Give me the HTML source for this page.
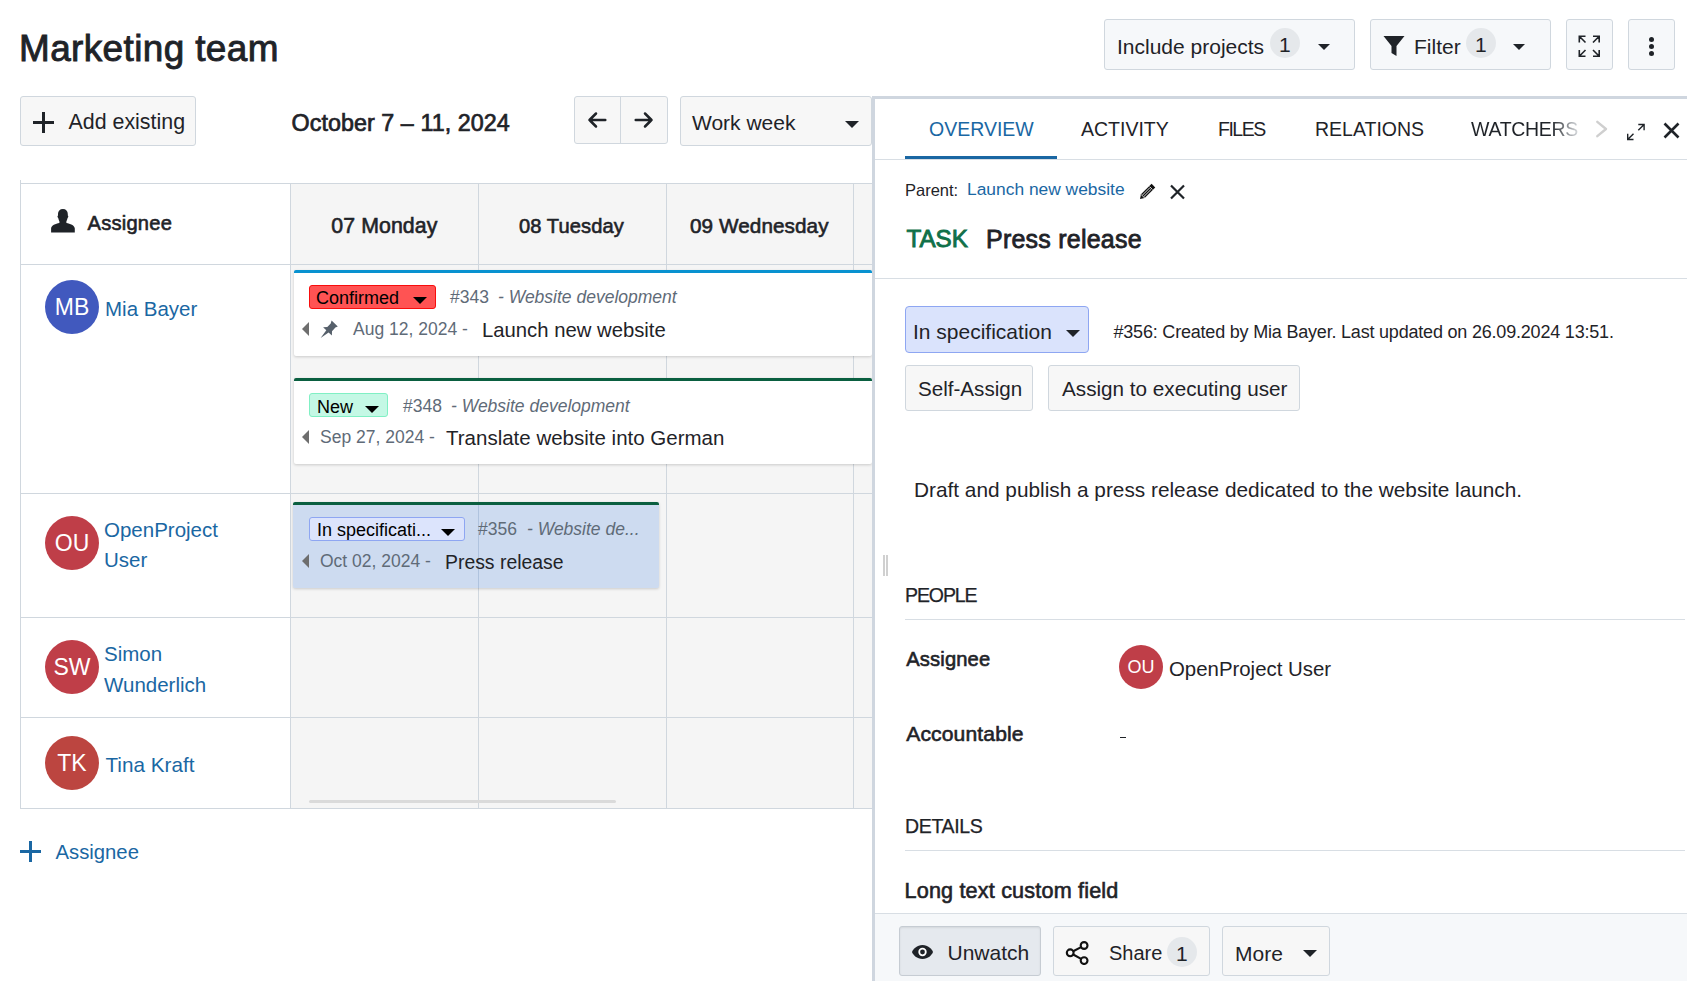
<!DOCTYPE html>
<html><head><meta charset="utf-8">
<style>
*{box-sizing:border-box;margin:0;padding:0}
html,body{width:1687px;height:981px;overflow:hidden;background:#fff}
body{position:relative;font-family:"Liberation Sans",sans-serif;color:#1f2328}
.a{position:absolute}
.t{position:absolute;line-height:1;white-space:nowrap}
.btn{position:absolute;border:1px solid #d0d7de;border-radius:3px;background:#f6f8fa}
.caret{position:absolute;width:0;height:0;border-left:6px solid transparent;border-right:6px solid transparent;border-top:6px solid #1f2328}
.cnt{position:absolute;border-radius:50%;background:#e5e8eb}
.vl{position:absolute;width:1px;background:#d0d7de}
.hl{position:absolute;height:1px;background:#d0d7de}
.av{position:absolute;border-radius:50%;color:#fff;text-align:center}
.link{color:#1a67a3}
.grey{color:#5f6b78}
.sb{-webkit-text-stroke:0.6px currentColor}
</style></head><body>

<!-- ===== Header ===== -->
<div class="t sb" style="left:19px;top:31px;font-size:36.9px;letter-spacing:0.4px;-webkit-text-stroke:0.9px #1f2328">Marketing team</div>

<div class="btn" style="left:1104px;top:19px;width:251px;height:51px"></div>
<div class="t" style="left:1117px;top:36px;font-size:21px">Include projects</div>
<div class="cnt" style="left:1270px;top:28px;width:30px;height:30px"></div>
<div class="t" style="left:1279px;top:34px;font-size:21px">1</div>
<div class="caret" style="left:1318px;top:44px"></div>

<div class="btn" style="left:1370px;top:19px;width:181px;height:51px"></div>
<svg class="a" style="left:1383px;top:35px" width="22" height="22" viewBox="0 0 22 22"><path d="M0.5 1h21l-8 10v10l-5-3v-7z" fill="#1f2328"/></svg>
<div class="t" style="left:1414px;top:36px;font-size:21px">Filter</div>
<div class="cnt" style="left:1466px;top:28px;width:30px;height:30px"></div>
<div class="t" style="left:1475px;top:34px;font-size:21px">1</div>
<div class="caret" style="left:1513px;top:44px"></div>

<div class="btn" style="left:1566px;top:19px;width:47px;height:51px"></div>
<svg class="a" style="left:1577.5px;top:35px" width="23" height="23" viewBox="0 0 23 23" fill="none" stroke="#1f2328" stroke-width="1.6"><path d="M1.3 7.5V1.3h6.2M1.3 1.3l6.2 6.2M15 1.3h6.2v6.2M21.2 1.3L15 7.5M1.3 15v6.2h6.2M1.3 21.2L7.5 15M21.2 15v6.2H15M21.2 21.2L15 15"/></svg>

<div class="btn" style="left:1628px;top:19px;width:47px;height:51px"></div>
<div class="a" style="left:1648.5px;top:37px;width:5.4px;height:5.4px;border-radius:50%;background:#1f2328"></div>
<div class="a" style="left:1648.5px;top:43.8px;width:5.4px;height:5.4px;border-radius:50%;background:#1f2328"></div>
<div class="a" style="left:1648.5px;top:50.6px;width:5.4px;height:5.4px;border-radius:50%;background:#1f2328"></div>

<!-- ===== Toolbar ===== -->
<div class="btn" style="left:20px;top:96px;width:176px;height:50px;border-radius:3px;background:#f7f7f7"></div>
<div class="a" style="left:33px;top:121px;width:21px;height:3px;background:#1f2328"></div>
<div class="a" style="left:42px;top:112px;width:3px;height:21px;background:#1f2328"></div>
<div class="t" style="left:68.5px;top:111.5px;font-size:21.4px">Add existing</div>

<div class="t sb" style="left:291.6px;top:111.8px;font-size:23.3px;letter-spacing:0.05px;-webkit-text-stroke:0.7px #1f2328">October 7 – 11, 2024</div>

<div class="btn" style="left:574px;top:96px;width:94px;height:48px;border-radius:3px;background:#f7f7f7"></div>
<div class="vl" style="left:620px;top:97px;height:46px"></div>
<svg class="a" style="left:587px;top:111px" width="20" height="18" viewBox="0 0 20 18" fill="none" stroke="#1f2328" stroke-width="2.5" stroke-linecap="round" stroke-linejoin="round"><path d="M18.3 9H2.5M9 2.5L2.5 9 9 15.5"/></svg>
<svg class="a" style="left:634px;top:111px" width="20" height="18" viewBox="0 0 20 18" fill="none" stroke="#1f2328" stroke-width="2.5" stroke-linecap="round" stroke-linejoin="round"><path d="M1.7 9h15.8M11 2.5L17.5 9 11 15.5"/></svg>

<div class="btn" style="left:680px;top:96px;width:192px;height:50px;border-radius:3px;background:#f7f7f7"></div>
<div class="t" style="left:692px;top:112px;font-size:21px">Work week</div>
<div class="caret" style="left:845px;top:121px;border-left-width:7px;border-right-width:7px;border-top-width:7px"></div>

<!-- ===== Calendar ===== -->
<div class="a" style="left:290px;top:183px;width:582px;height:626px;background:#f5f5f5"></div>
<div class="hl" style="left:20px;top:183px;width:852px"></div>
<div class="hl" style="left:20px;top:264px;width:852px"></div>
<div class="hl" style="left:20px;top:493px;width:852px"></div>
<div class="hl" style="left:20px;top:617px;width:852px"></div>
<div class="hl" style="left:20px;top:717px;width:852px"></div>
<div class="hl" style="left:20px;top:808px;width:852px"></div>
<div class="vl" style="left:20px;top:180px;height:629px"></div>
<div class="vl" style="left:290px;top:183px;height:626px"></div>
<div class="vl" style="left:478px;top:183px;height:626px"></div>
<div class="vl" style="left:666px;top:183px;height:626px"></div>
<div class="vl" style="left:853px;top:183px;height:626px"></div>

<svg class="a" style="left:50px;top:208px" width="26" height="26" viewBox="0 0 26 26"><path d="M12.9 1C16 1 17.8 3 17.8 6L17.8 7.5C18.5 7.8 18.5 9.2 17.6 9.9C17.2 11.5 16.8 12.5 16.4 13.3L16.4 15C20 15.8 24.8 17.3 24.8 20.5V24.6H1.1V20.5C1.1 17.3 5.8 15.8 9.4 15L9.4 13.3C9 12.5 8.6 11.5 8.2 9.9C7.3 9.2 7.3 7.8 8 7.5L8 6C8 3 9.8 1 12.9 1z" fill="#1f2328"/></svg>
<div class="t sb" style="left:87.5px;top:212.5px;font-size:20.1px;letter-spacing:0.24px">Assignee</div>
<div class="t sb" style="left:331.3px;top:215.5px;font-size:21.3px;letter-spacing:0.08px">07 Monday</div>
<div class="t sb" style="left:519px;top:216px;font-size:20.1px;letter-spacing:0.1px">08 Tuesday</div>
<div class="t sb" style="left:690px;top:215.5px;font-size:20.7px;letter-spacing:0.08px">09 Wednesday</div>

<div class="av" style="left:45px;top:280px;width:54px;height:54px;background:#4159be;font-size:23px;line-height:54px">MB</div>
<div class="t link" style="left:105px;top:299px;font-size:20.5px">Mia Bayer</div>

<div class="av" style="left:45px;top:516px;width:54px;height:54px;background:#bf3e48;font-size:23px;line-height:54px">OU</div>
<div class="t link" style="left:104px;top:520px;font-size:20.5px">OpenProject</div>
<div class="t link" style="left:104px;top:550px;font-size:20.5px">User</div>

<div class="av" style="left:45px;top:640px;width:54px;height:54px;background:#bf3e48;font-size:23px;line-height:54px">SW</div>
<div class="t link" style="left:104px;top:644px;font-size:20.5px">Simon</div>
<div class="t link" style="left:104px;top:675px;font-size:20.5px">Wunderlich</div>

<div class="av" style="left:45px;top:736px;width:54px;height:54px;background:#bc4540;font-size:23px;line-height:54px">TK</div>
<div class="t link" style="left:105.5px;top:754.5px;font-size:20.7px">Tina Kraft</div>

<div class="a" style="left:309px;top:800px;width:307px;height:3px;border-radius:2px;background:#dadada"></div>

<!-- cards -->
<div class="a" style="left:294px;top:270px;width:578px;height:86px;background:#fff;border-top:3px solid #0892d0;border-radius:2px;box-shadow:0 1px 3px rgba(0,0,0,.18)"></div>
<div class="a" style="left:309px;top:285px;width:127px;height:24px;background:#ff5353;border:1px solid #f80d0d;border-radius:3px"></div>
<div class="t" style="left:316px;top:289px;font-size:18px;color:#000">Confirmed</div>
<div class="caret" style="left:413px;top:297px;border-top-color:#000;border-left-width:7px;border-right-width:7px;border-top-width:7px"></div>
<div class="t grey" style="left:450px;top:289px;font-size:17.5px">#343</div>
<div class="t grey" style="left:498px;top:289px;font-size:17.5px;font-style:italic">- Website development</div>
<svg class="a" style="left:302px;top:322px" width="8" height="14" viewBox="0 0 8 14"><path d="M7 0v14L0 7z" fill="#6e6e6e"/></svg>
<svg class="a" style="left:320px;top:320px" width="18" height="18" viewBox="0 0 18 18"><path d="M11.6 0.4L17.8 6.5L15.4 7.6L12 11.2L11.9 15.4L8.6 12.4L0.6 17.9L6.3 10.2L3.1 7.3L7.3 6.9L10.7 3.4z" fill="#56606b"/></svg>
<div class="t grey" style="left:353px;top:321px;font-size:17.5px">Aug 12, 2024 -</div>
<div class="t" style="left:482px;top:320px;font-size:20.3px">Launch new website</div>

<div class="a" style="left:294px;top:378px;width:578px;height:86px;background:#fff;border-top:3px solid #0a5f40;border-radius:2px;box-shadow:0 1px 3px rgba(0,0,0,.18)"></div>
<div class="a" style="left:309px;top:393px;width:79px;height:24px;background:#c4f8e5;border:1px solid #80f0c4;border-radius:3px"></div>
<div class="t" style="left:317px;top:398px;font-size:18px;color:#000">New</div>
<div class="caret" style="left:365px;top:406px;border-top-color:#000;border-left-width:7px;border-right-width:7px;border-top-width:7px"></div>
<div class="t grey" style="left:403px;top:398px;font-size:17.5px">#348</div>
<div class="t grey" style="left:451px;top:398px;font-size:17.5px;font-style:italic">- Website development</div>
<svg class="a" style="left:302px;top:429.5px" width="8" height="14" viewBox="0 0 8 14"><path d="M7 0v14L0 7z" fill="#6e6e6e"/></svg>
<div class="t grey" style="left:320px;top:429px;font-size:17.5px">Sep 27, 2024 -</div>
<div class="t" style="left:446px;top:428px;font-size:20.5px">Translate website into German</div>

<div class="a" style="left:293px;top:502px;width:366px;height:86px;background:rgba(26,103,220,.18);border-top:3px solid #0a5f40;border-radius:2px;box-shadow:0 1px 3px rgba(0,0,0,.18)"></div>
<div class="a" style="left:309px;top:517px;width:156px;height:24px;background:#dce4fc;border:1px solid #8ea6f2;border-radius:3px"></div>
<div class="t" style="left:317px;top:521px;font-size:18px;color:#000">In specificati...</div>
<div class="caret" style="left:441px;top:529px;border-top-color:#000;border-left-width:7px;border-right-width:7px;border-top-width:7px"></div>
<div class="t grey" style="left:478px;top:521px;font-size:17.5px">#356</div>
<div class="t grey" style="left:527px;top:521px;font-size:17.5px;font-style:italic">- Website de...</div>
<svg class="a" style="left:302px;top:554px" width="8" height="14" viewBox="0 0 8 14"><path d="M7 0v14L0 7z" fill="#6e6e6e"/></svg>
<div class="t grey" style="left:320px;top:553px;font-size:17.5px">Oct 02, 2024 -</div>
<div class="t" style="left:445px;top:552.5px;font-size:19.4px">Press release</div>

<!-- add assignee -->
<div class="a" style="left:20px;top:850px;width:21px;height:3px;background:#1a67a3"></div>
<div class="a" style="left:29px;top:841px;width:3px;height:21px;background:#1a67a3"></div>
<div class="t link" style="left:55.5px;top:841.5px;font-size:20.3px">Assignee</div>

<!-- ===== Split panel ===== -->
<div id="panel" class="a" style="left:872px;top:96px;width:815px;height:885px;background:#fff;border-left:3px solid #cfd6df;border-top:3px solid #cfd6df"></div>
<div class="hl" style="left:875px;top:159px;width:812px;background:#d8dee4"></div>
<div class="t link" style="left:929px;top:120px;font-size:19.5px">OVERVIEW</div>
<div class="a" style="left:905px;top:156px;width:152px;height:3px;background:#1a67a3"></div>
<div class="t" style="left:1081px;top:120px;font-size:19.5px">ACTIVITY</div>
<div class="t" style="left:1218px;top:120px;font-size:19.5px;letter-spacing:-1.5px">FILES</div>
<div class="t" style="left:1315px;top:120px;font-size:19.5px">RELATIONS</div>
<div class="t" style="left:1471px;top:120px;font-size:19.5px;letter-spacing:-0.3px;background:linear-gradient(90deg,#1f2328 75%,#d8dbde 100%);-webkit-background-clip:text;color:transparent">WATCHERS</div>
<svg class="a" style="left:1595px;top:120px" width="14" height="18" viewBox="0 0 14 18" fill="none" stroke="#cfcfcf" stroke-width="2.4" stroke-linecap="round" stroke-linejoin="round"><path d="M2.3 1.8l8.7 7.2-8.7 7.2"/></svg>
<svg class="a" style="left:1626px;top:122.5px" width="20" height="18" viewBox="0 0 20 18" fill="none" stroke="#1f2328" stroke-width="1.4"><path d="M12.3 1.5h5.8v5.8M18.1 1.5L12.3 7.3M7.5 16.5H1.7v-5.8M1.7 16.5l5.8-5.8"/></svg>
<svg class="a" style="left:1663px;top:122px" width="17" height="17" viewBox="0 0 17 17" fill="none" stroke="#1f2328" stroke-width="2.6"><path d="M1.5 1.5l14 14M15.5 1.5l-14 14"/></svg>

<div class="t" style="left:905px;top:182px;font-size:16.5px">Parent:</div>
<div class="t link" style="left:967px;top:181px;font-size:17.4px">Launch new website</div>
<svg class="a" style="left:1139px;top:182.6px" width="17" height="17" viewBox="0 0 17 17"><path d="M1 16L1.99 11.33 12.59 0.73 16.27 4.41 5.67 15.01z" fill="#111"/><path d="M10.55 3.63L13.37 6.45M1.99 11.33L5.67 15.01M4.89 13.53L12.31 6.11M3.47 12.11L10.89 4.69" stroke="#fff" stroke-width="0.85"/></svg>
<svg class="a" style="left:1169px;top:183.5px" width="17" height="16" viewBox="0 0 17 16" fill="none" stroke="#1f2328" stroke-width="2.2"><path d="M2 1.5l13 13M15 1.5l-13 13"/></svg>

<div class="t sb" style="left:906.5px;top:227.3px;font-size:24.2px;color:#0f7049;-webkit-text-stroke:0.9px #0f7049">TASK</div>
<div class="t sb" style="left:986px;top:226.6px;font-size:25px;letter-spacing:0.23px;-webkit-text-stroke:0.8px #1f2328">Press release</div>
<div class="hl" style="left:875px;top:278px;width:812px;background:#d8dee4"></div>

<div class="btn" style="left:905px;top:306px;width:184px;height:47px;background:#dae3fc;border-color:#8ea6f2;border-radius:4px"></div>
<div class="t" style="left:913px;top:321px;font-size:21px">In specification</div>
<div class="caret" style="left:1066px;top:330px;border-left-width:7px;border-right-width:7px;border-top-width:7px"></div>
<div class="t" style="left:1113.5px;top:323px;font-size:18px;letter-spacing:-0.2px">#356: Created by Mia Bayer. Last updated on 26.09.2024 13:51.</div>

<div class="btn" style="left:905px;top:365px;width:128px;height:46px;border-radius:3px;background:#f7f7f7"></div>
<div class="t" style="left:918px;top:379px;font-size:20.6px">Self-Assign</div>
<div class="btn" style="left:1048px;top:365px;width:252px;height:46px;border-radius:3px;background:#f7f7f7"></div>
<div class="t" style="left:1062px;top:379px;font-size:20.7px">Assign to executing user</div>

<div class="t" style="left:914px;top:480px;font-size:20.8px">Draft and publish a press release dedicated to the website launch.</div>

<div class="a" style="left:883px;top:555px;width:1.5px;height:21px;background:#d0d0d0"></div>
<div class="a" style="left:886px;top:555px;width:1.5px;height:21px;background:#d0d0d0"></div>

<div class="t" style="left:905px;top:585.8px;font-size:19.5px;letter-spacing:-1.1px;-webkit-text-stroke:0.25px #1f2328">PEOPLE</div>
<div class="hl" style="left:905px;top:619px;width:780px;background:#d8dee4"></div>
<div class="t sb" style="left:906.2px;top:648.6px;font-size:20.2px;letter-spacing:0.14px">Assignee</div>
<div class="av" style="left:1119px;top:645px;width:44px;height:44px;background:#bf3e48;font-size:18px;line-height:44px">OU</div>
<div class="t" style="left:1169px;top:659px;font-size:20.4px">OpenProject User</div>
<div class="t sb" style="left:906.2px;top:722.5px;font-size:21.1px;letter-spacing:0.13px">Accountable</div>
<div class="a" style="left:1120px;top:737px;width:6px;height:1.3px;background:#1f2328"></div>

<div class="t" style="left:905px;top:816.8px;font-size:19.5px;letter-spacing:-0.35px;-webkit-text-stroke:0.25px #1f2328">DETAILS</div>
<div class="hl" style="left:905px;top:850px;width:780px;background:#d8dee4"></div>
<div class="t sb" style="left:904.5px;top:879.5px;font-size:21.6px;letter-spacing:0.18px">Long text custom field</div>

<!-- footer -->
<div class="a" style="left:875px;top:913px;width:812px;height:68px;background:#f6f8fa;border-top:1px solid #d8dee4"></div>
<div class="btn" style="left:899px;top:926px;width:142px;height:50px;background:#e5e9ee;border-color:#c6ccd3;border-radius:3px;box-shadow:inset 0 1px 2px rgba(0,0,0,.08)"></div>
<svg class="a" style="left:911px;top:944px" width="23" height="16" viewBox="0 0 23 16"><path d="M11.5 1C6 1 2 5 1 8c1 3 5 7 10.5 7S21 11 22 8c-1-3-5-7-10.5-7z" fill="#1f2328"/><circle cx="11.5" cy="8" r="4.2" fill="#fff"/><circle cx="11.5" cy="8" r="2.4" fill="#1f2328"/></svg>
<div class="t" style="left:947.5px;top:942px;font-size:21px">Unwatch</div>
<div class="btn" style="left:1053px;top:926px;width:157px;height:50px;background:#f7f7f7"></div>
<svg class="a" style="left:1065px;top:939px" width="25" height="26" viewBox="0 0 25 26" fill="none" stroke="#111" stroke-width="2.1"><circle cx="19.1" cy="6.5" r="3.4"/><circle cx="5.2" cy="13.8" r="3.4"/><circle cx="19.1" cy="21.6" r="3.4"/><path d="M8.2 12.2l7.9-4.1M8.2 15.5l7.9 4.4"/></svg>
<div class="t" style="left:1109px;top:943px;font-size:20px">Share</div>
<div class="cnt" style="left:1167px;top:937px;width:30px;height:30px"></div>
<div class="t" style="left:1176px;top:943px;font-size:21px">1</div>
<div class="btn" style="left:1222px;top:926px;width:108px;height:50px;background:#f7f7f7"></div>
<div class="t" style="left:1235px;top:943px;font-size:21px">More</div>
<div class="caret" style="left:1303px;top:950px;border-left-width:7px;border-right-width:7px;border-top-width:7px"></div>

</body></html>
